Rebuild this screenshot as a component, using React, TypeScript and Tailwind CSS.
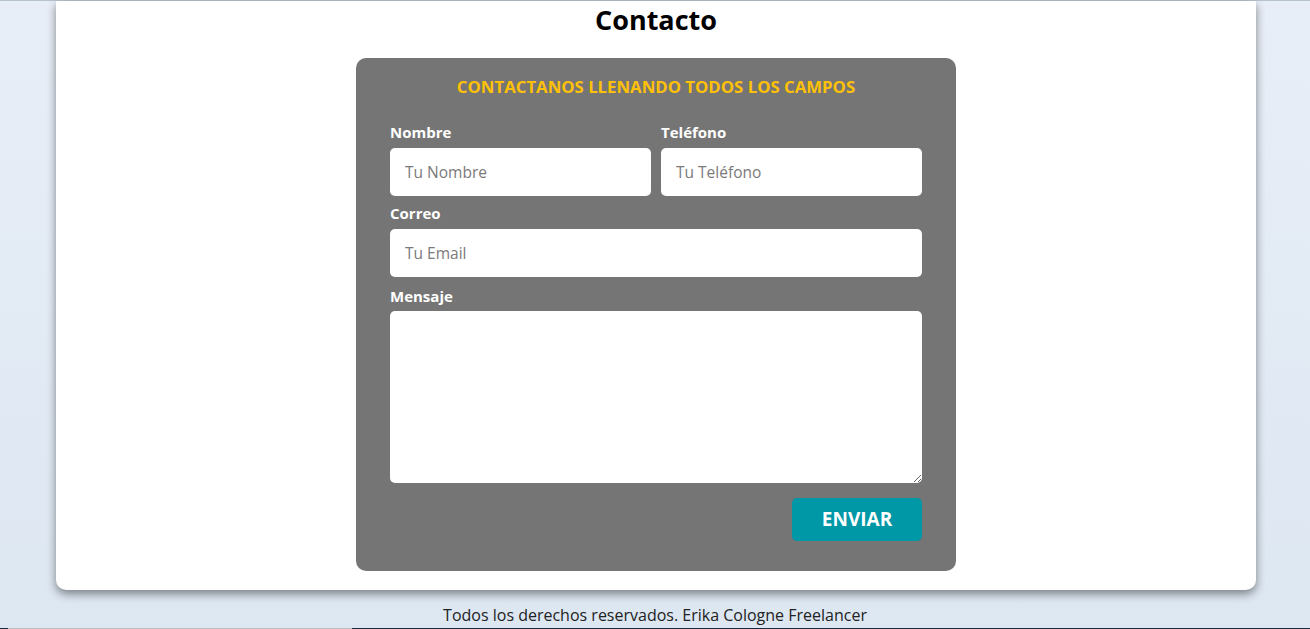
import React from 'react';

const font = { fontFamily: '"Open Sans", "Noto Sans", sans-serif' };

const Field: React.FC<{ label: string; placeholder: string; className?: string }> = ({ label, placeholder, className }) => (
  <div className={className}>
    <label className="block text-white font-bold text-[15px] leading-[20px] mb-[6px]">{label}</label>
    <input
      type="text"
      placeholder={placeholder}
      className="block w-full h-[48px] px-[15px] bg-white rounded-[5px] text-[15.5px] text-gray-700 placeholder:text-[#7a7a7a] outline-none"
    />
  </div>
);

const App: React.FC = () => {
  return (
    <div className="min-h-[629px] h-[629px] overflow-hidden flex flex-col bg-gradient-to-b from-[#e8eef7] to-[#dde7f2]" style={font}>
      <div className="h-px bg-[#b7c3cf]" />
      <section className="ml-[56px] w-[1200px] bg-white rounded-b-[10px] shadow-[0_4px_10px_rgba(0,0,0,0.45)] pt-[1px] pb-[19px]">
        <h1 className="text-center text-[27px] leading-[36px] font-bold text-black">Contacto</h1>
        <form
          className="mt-[20px] mx-auto w-[600px] bg-[#757575] rounded-[10px] px-[34px] pt-[18px] pb-[30px]"
          onSubmit={(e) => e.preventDefault()}
        >
          <h2 className="text-center text-[#ffc107] font-bold text-[16.75px] leading-[22px] mb-[24px]">
            CONTACTANOS LLENANDO TODOS LOS CAMPOS
          </h2>
          <div className="flex gap-[10px]">
            <Field label="Nombre" placeholder="Tu Nombre" className="flex-1" />
            <Field label="Teléfono" placeholder="Tu Teléfono" className="flex-1" />
          </div>
          <Field label="Correo" placeholder="Tu Email" className="mt-[7px]" />
          <div className="mt-[9px]">
            <label className="block text-white font-bold text-[15px] leading-[20px] mb-[5px]">Mensaje</label>
            <textarea className="block w-full h-[172px] bg-white rounded-[5px] p-[14px] text-[15px] outline-none" />
          </div>
          <div className="flex justify-end mt-[15px]">
            <button
              type="submit"
              className="w-[130px] h-[43px] bg-[#0097a7] text-white font-bold text-[19px] rounded-[5px]"
            >
              ENVIAR
            </button>
          </div>
        </form>
      </section>
      <footer className="flex-1 flex items-center justify-center pt-[11px]">
        <p className="text-[16px] text-[#222] leading-[20px]">Todos los derechos reservados. Erika Cologne Freelancer</p>
      </footer>
      <div className="flex h-px">
        <div className="w-[8px] bg-[#1b2b3e]" />
        <div className="w-[344px] bg-[#bdbdbd]" />
        <div className="flex-1 bg-[#1b2b3e]" />
      </div>
    </div>
  );
};

export default App;
